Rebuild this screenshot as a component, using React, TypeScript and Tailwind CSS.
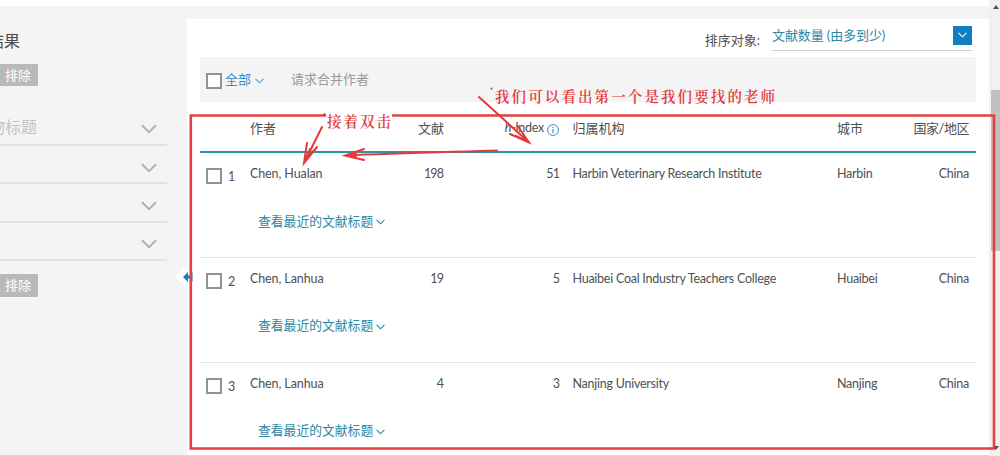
import clsx from "clsx";
import React from "react";

interface Author {
	id: number;
	name: string;
	documents: number;
	hIndex: number;
	affiliation: string;
	city: string;
	country: string;
}

const authors: Author[] = [
	{
		id: 1,
		name: "Chen, Hualan",
		documents: 198,
		hIndex: 51,
		affiliation: "Harbin Veterinary Research Institute",
		city: "Harbin",
		country: "China",
	},
	{
		id: 2,
		name: "Chen, Lanhua",
		documents: 19,
		hIndex: 5,
		affiliation: "Huaibei Coal Industry Teachers College",
		city: "Huaibei",
		country: "China",
	},
	{
		id: 3,
		name: "Chen, Lanhua",
		documents: 4,
		hIndex: 3,
		affiliation: "Nanjing University",
		city: "Nanjing",
		country: "China",
	},
];

const Chevron = ({ className }: { className?: string }) => (
	<svg
		viewBox="0 0 16 10"
		fill="none"
		stroke="currentColor"
		className={clsx("shrink-0", className)}
	>
		<path d="M1 1.2l7 7 7-7" />
	</svg>
);

const Checkbox = () => (
	<span className="block size-4 shrink-0 border-2 border-[#929292] bg-white" />
);

const ExcludeButton = ({ className }: { className?: string }) => (
	<button
		className={clsx(
			"block w-[38px] bg-[#b9b9b9] pl-[5px] text-left text-[13px] text-white",
			className,
		)}
	>
		排除
	</button>
);

const FilterRow = ({ label }: { label?: string }) => (
	<div className="flex h-[38.4px] w-[167px] items-center justify-between border-b-2 border-[#e2e2e2] pr-[10px]">
		<span className="-ml-[11px] mt-[3px] text-[16px] text-[#c4c4c4]">
			{label}
		</span>
		<Chevron className="mt-[7px] h-[10px] w-4 stroke-2 text-[#b0b0b0]" />
	</div>
);

const Sidebar = () => (
	<aside className="w-[187px] shrink-0 overflow-hidden">
		<h2 className="-ml-3 mt-[23px] h-6 text-[16px] leading-6 text-[#4b4b4b]">
			结果
		</h2>
		<ExcludeButton className="mt-[11px] h-[22px] leading-[22px]" />
		<div className="mt-[21.5px]">
			<FilterRow label="物标题" />
			<FilterRow />
			<FilterRow />
			<FilterRow />
		</div>
		<ExcludeButton className="mt-[12.5px] h-[23px] leading-[23px]" />
	</aside>
);

const SortBar = () => (
	<div className="flex h-[38px] justify-end pr-1">
		<span className="mr-3 mt-[10.5px] text-[13px] leading-5 text-[#505050]">
			排序对象:
		</span>
		<div className="flex h-8 w-[200px] justify-between border-b border-[#cfcfcf]">
			<span className="mt-[6px] text-[13px] leading-5 tracking-[-0.1px] text-[#2d87a3]">
				文献数量 (由多到少)
			</span>
			<span className="mt-[6.5px] flex h-[19px] w-[19px] items-center justify-center bg-[#0f7fc1] text-white">
				<Chevron className="h-[6px] w-[9px] stroke-2" />
			</span>
		</div>
	</div>
);

const Toolbar = () => (
	<div className="flex h-[45px] items-center bg-[#f4f4f4] pl-[6px] text-[13px]">
		<span className="mt-[2px]">
			<Checkbox />
		</span>
		<span className="ml-[3px] text-[#2f8fca]">全部</span>
		<Chevron className="ml-[4px] mt-[3px] h-[6px] w-[9px] stroke-2 text-[#4a9ccc]" />
		<span className="ml-[27px] text-[#999]">请求合并作者</span>
	</div>
);

const TableHeader = () => (
	<div className="mt-[14px] grid h-[37px] grid-cols-[50px_100px_94px_116px_12.5px_264.5px_1fr_auto] border-b-2 border-[#2c93ad] pr-[7px] pt-[2px] leading-5">
		<span />
		<span>作者</span>
		<span className="text-right">文献</span>
		<span className="flex h-5 items-center justify-end whitespace-nowrap pr-px text-[12.5px] tracking-[-0.25px]">
			<i>h</i>-index
			<svg
				viewBox="0 0 12 12"
				className="ml-[3px] mt-[3px] size-3"
				fill="none"
				stroke="#2f8fca"
			>
				<circle cx="6" cy="6" r="5.4" />
				<path d="M6 5v4M6 2.7v1.2" strokeWidth="1.2" />
			</svg>
		</span>
		<span />
		<span>归属机构</span>
		<span>城市</span>
		<span className="tracking-[-0.5px]">国家/地区</span>
	</div>
);

const AuthorRow = ({ author }: { author: Author }) => (
	<div className="h-[104.9px] border-b border-[#e3e3e3]">
		<div className="grid h-[54.5px] grid-cols-[50px_100px_94px_116px_12.5px_264.5px_1fr_auto] pr-[7px] pt-[11px] text-[12.5px] leading-5 tracking-[-0.25px]">
			<span className="flex h-5 items-start pl-[6px] pt-[4px]">
				<Checkbox />
				<span className="-mt-px ml-[6px]">{author.id}</span>
			</span>
			<span className="whitespace-nowrap tracking-[-0.1px]">
				{author.name}
			</span>
			<span className="pr-px text-right tracking-[-0.9px]">
				{author.documents}
			</span>
			<span className="pr-px text-right tracking-[-0.9px]">
				{author.hIndex}
			</span>
			<span />
			<span className="whitespace-nowrap">{author.affiliation}</span>
			<span>{author.city}</span>
			<span>{author.country}</span>
		</div>
		<a className="ml-[58px] flex items-center text-[12.8px] leading-[26px] text-[#2d87a3]">
			查看最近的文献标题
			<Chevron className="ml-[3px] mt-[3px] h-[6px] w-[9px] stroke-2" />
		</a>
	</div>
);

const ScrollBar = () => (
	<div className="w-[11px] shrink-0 bg-[#f1f1f1]">
		<svg viewBox="0 0 6 4" className="ml-1 mt-[5px] h-1 w-[6px] fill-[#505050]">
			<path d="M0 4l3-4 3 4z" />
		</svg>
		<div className="ml-[2px] mt-[81px] h-[161px] bg-[#c1c1c1]" />
		<svg
			viewBox="0 0 6 4"
			className="ml-1 mt-[195px] h-1 w-[6px] fill-[#505050]"
		>
			<path d="M0 0l3 4 3-4z" />
		</svg>
	</div>
);

// Hand drawn notes lying over the page
const Annotations = () => (
	<div className="pointer-events-none absolute inset-0 font-['Noto_Serif_CJK_SC','Noto_Sans_CJK_SC',serif] font-semibold text-[#e23b3b]">
		<svg
			viewBox="0 0 1000 456"
			className="absolute inset-0 h-full w-full"
			fill="none"
			stroke="#e23b3b"
			strokeWidth="2"
			strokeLinecap="round"
		>
			<path
				d="M325 115.5H190.8V448.5H994V115.5H393"
				strokeWidth="2.6"
				stroke="#e24141"
			/>
			<path d="M322 127L304 163M307 143L304 163L317 147M310 149L304 163L313 151" />
			<path d="M497 150.5C450 152 400 153 345 155.5M364 149L345 155.5L364 160M356 153L345 155.5L356 157" />
			<path d="M479 97L529 142.5M517 125L529 142.5L510 134M521 131L529 142.5L516 136" />
			<path d="M491.5 88.5v.3M324.5 114v.3" />
		</svg>
		<span className="absolute left-[327px] top-[111px] whitespace-nowrap text-[14.5px] leading-5 tracking-[2px]">
			接着双击
		</span>
		<span className="absolute left-[495px] top-[85.5px] whitespace-nowrap text-[14.5px] leading-5 tracking-[2.1px]">
			我们可以看出第一个是我们要找的老师
		</span>
	</div>
);

const App = () => (
	<div className="relative flex h-[456px] w-[1000px] overflow-hidden bg-[#f4f4f4] font-['Lato','Noto_Sans_CJK_SC',sans-serif] text-[#505050]">
		<div className="flex min-w-0 flex-1 flex-col">
			<div className="h-[6px] shrink-0 bg-white" />
			<div className="flex min-h-0 flex-1">
				<Sidebar />
				<main className="relative mt-[13px] flex-1 bg-white pl-[13px] pr-[13px]">
					<SortBar />
					<Toolbar />
					<div className="text-[13px]">
						<TableHeader />
						{authors.map((author) => (
							<AuthorRow key={author.id} author={author} />
						))}
					</div>
					{/* Handle that folds the sidebar */}
					<svg
						viewBox="0 0 18 26"
						className="absolute -left-3 top-[245px] h-[26px] w-[18px]"
					>
						<path d="M0 13L12 1v24z" fill="#fff" />
						<path
							d="M8 13l5-5v3.5h3v3h-3V18zM16.5 8.5h1v9h-1z"
							fill="#0f7fc1"
						/>
					</svg>
				</main>
			</div>
			<div className="h-px shrink-0 bg-[#d8d8d8]" />
		</div>
		<ScrollBar />
		<Annotations />
	</div>
);

export default App;
